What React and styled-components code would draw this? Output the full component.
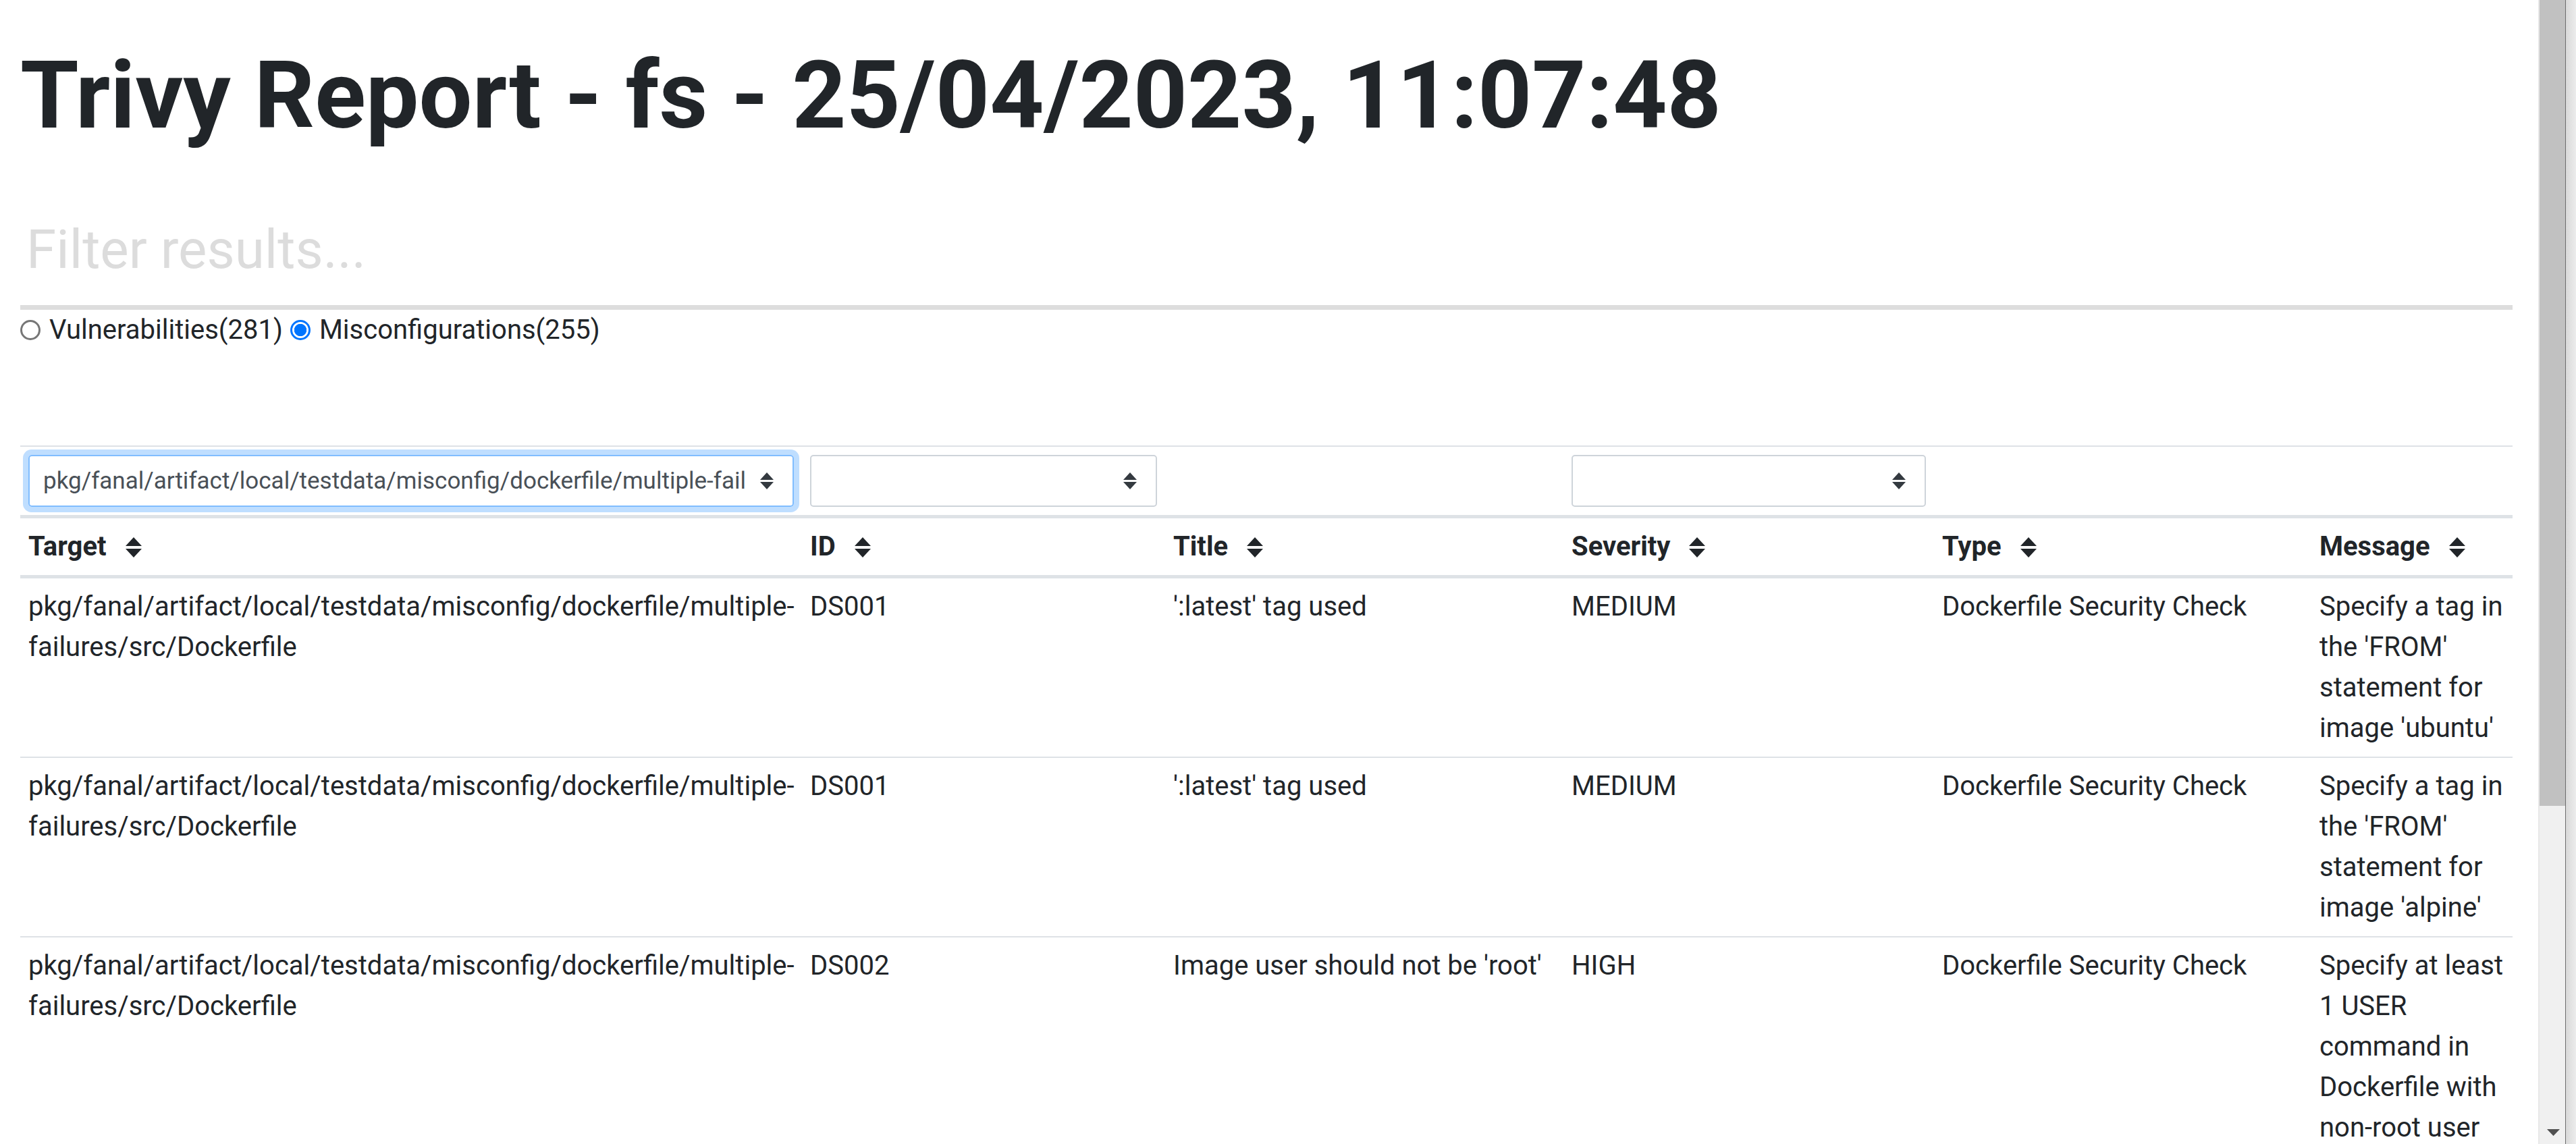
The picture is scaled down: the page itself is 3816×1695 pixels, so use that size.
import React, { useState } from 'react';
import styled, { createGlobalStyle } from 'styled-components';

const GlobalStyle = createGlobalStyle`
  html, body {
    margin: 0;
    padding: 0;
    background: #fff;
    overflow: hidden;
  }
  body {
    font-family: Roboto, "Liberation Sans", sans-serif;
    color: #212529;
  }
`;

const Window = styled.div`
  display: flex;
  height: 100vh;
  overflow: hidden;
`;

const Page = styled.div`
  flex: 1;
  min-width: 0;
  padding: 57px 38px 0 30px;
  font-size: 40px;
  line-height: 60px;
`;

const Title = styled.h1`
  margin: 0 0 63px;
  font-size: 140px;
  line-height: 168px;
  font-weight: 700;
  color: #212529;
`;

const FilterInput = styled.input`
  display: block;
  width: 100%;
  height: 171px;
  box-sizing: border-box;
  margin: 0;
  padding: 0 0 0 9px;
  border: none;
  border-bottom: 7px solid #dddddd;
  font-family: Roboto, sans-serif;
  font-size: 80px;
  color: #212529;
  outline: none;
  background: transparent;

  &::placeholder {
    color: #dcdcdc;
  }
`;

const RadioRow = styled.div`
  display: flex;
  align-items: center;
  height: 60px;
`;

const RadioLabel = styled.label`
  display: flex;
  align-items: center;
  gap: 13px;
  margin-right: 11px;
  cursor: pointer;
`;

const Radio = styled.input`
  appearance: none;
  width: 30px;
  height: 30px;
  margin: 0;
  border-radius: 50%;
  box-sizing: border-box;
  border: 3px solid #767676;
  background: #fff;

  &:checked {
    border-color: #0075ff;
    background: radial-gradient(circle, #0075ff 0 52%, #fff 56%);
  }
`;

const Table = styled.table`
  margin-top: 141px;
  width: 100%;
  border-collapse: collapse;
  table-layout: fixed;
`;

const FilterCell = styled.td`
  padding: 12px;
  border-top: 2px solid #dee2e6;
  border-bottom: 5px solid #dee2e6;
  vertical-align: top;
`;

const HeadCell = styled.th`
  padding: 12px;
  text-align: left;
  font-weight: 700;
  border-bottom: 5px solid #dee2e6;
  white-space: nowrap;
`;

const Cell = styled.td`
  padding: 12px;
  vertical-align: top;
  border-top: 2px solid #dee2e6;
`;

const SelectWrap = styled.div`
  position: relative;
  width: 100%;
  border-radius: 5px;
  box-shadow: ${p => (p.$focused ? '0 0 0 8px rgba(0, 123, 255, 0.25)' : 'none')};
`;

const Select = styled.select`
  display: block;
  width: 100%;
  height: 77px;
  box-sizing: border-box;
  appearance: none;
  margin: 0;
  padding: 0 70px 0 20px;
  border: 2.5px solid ${p => (p.$focused ? '#80bdff' : '#ced4da')};
  border-radius: 5px;
  background: #fff;
  font-family: Roboto, sans-serif;
  font-size: 35px;
  color: #495057;
  outline: none;
`;

const SelectArrow = styled.svg`
  position: absolute;
  right: 30px;
  top: 26px;
  pointer-events: none;
`;

const SortSvg = styled.svg`
  margin-left: 28px;
  vertical-align: -3px;
`;

const Scrollbar = styled.div`
  flex: none;
  width: 56px;
  display: flex;
  height: 100vh;
`;

const Track = styled.div`
  width: 40px;
  box-sizing: border-box;
  border-left: 2px solid #e8e8e8;
  background: #f0f0f0;
  display: flex;
  flex-direction: column;
`;

const Thumb = styled.div`
  height: 1194px;
  background: #c1c1c1;
`;

const TrackRest = styled.div`
  flex: 1;
`;

const ArrowButton = styled.div`
  height: 34px;
  display: flex;
  align-items: center;
  justify-content: center;
  padding-left: 2px;
`;

const WindowEdge = styled.div`
  flex: 1;
  border-left: 1px solid #6d6d6d;
  background: linear-gradient(to right, #d9d9d9, #ececec);
`;

const SortIcon = () => (
  <SortSvg width="24" height="30" viewBox="0 0 24 30">
    <path d="M12 0 L24 13 H0 Z M0 17 H24 L12 30 Z" fill="#212529" />
  </SortSvg>
);

const FilterSelect = ({ value, focused }) => (
  <SelectWrap $focused={focused}>
    <Select $focused={focused} defaultValue={value}>
      <option value={value}>{value}</option>
    </Select>
    <SelectArrow width="20" height="25" viewBox="0 0 20 25">
      <path d="M10 0 L20 11 H0 Z M0 14 H20 L10 25 Z" fill="#343a40" />
    </SelectArrow>
  </SelectWrap>
);

const target = 'pkg/fanal/artifact/local/testdata/misconfig/dockerfile/multiple-failures/src/Dockerfile';

const rows = [
  { id: 'DS001', title: "':latest' tag used", severity: 'MEDIUM', message: "Specify a tag in the 'FROM' statement for image 'ubuntu'" },
  { id: 'DS001', title: "':latest' tag used", severity: 'MEDIUM', message: "Specify a tag in the 'FROM' statement for image 'alpine'" },
  { id: 'DS002', title: "Image user should not be 'root'", severity: 'HIGH', message: 'Specify at least 1 USER command in Dockerfile with non-root user as the last USER command' },
  { id: 'DS026', title: 'No HEALTHCHECK defined', severity: 'LOW', message: 'Add HEALTHCHECK instruction in your Dockerfile' },
];

const columns = [
  { name: 'Target', width: 1158 },
  { name: 'ID', width: 538 },
  { name: 'Title', width: 590 },
  { name: 'Severity', width: 549 },
  { name: 'Type', width: 559 },
  { name: 'Message', width: 298 },
];

export default function App() {
  const [kind, setKind] = useState('misconf');

  return (
    <Window>
      <GlobalStyle />
      <Page>
        <Title>Trivy Report - fs - 25/04/2023, 11:07:48</Title>
        <FilterInput placeholder="Filter results..." />
        <RadioRow>
          <RadioLabel>
            <Radio type="radio" name="kind" checked={kind === 'vuln'} onChange={() => setKind('vuln')} />
            Vulnerabilities(281)
          </RadioLabel>
          <RadioLabel>
            <Radio type="radio" name="kind" checked={kind === 'misconf'} onChange={() => setKind('misconf')} />
            Misconfigurations(255)
          </RadioLabel>
        </RadioRow>
        <Table>
          <colgroup>
            {columns.map(c => <col key={c.name} style={{ width: c.width }} />)}
          </colgroup>
          <thead>
            <tr>
              <FilterCell><FilterSelect value={target} focused /></FilterCell>
              <FilterCell><FilterSelect value="" /></FilterCell>
              <FilterCell />
              <FilterCell><FilterSelect value="" /></FilterCell>
              <FilterCell />
              <FilterCell />
            </tr>
            <tr>
              {columns.map(c => (
                <HeadCell key={c.name}>{c.name}<SortIcon /></HeadCell>
              ))}
            </tr>
          </thead>
          <tbody>
            {rows.map((r, i) => (
              <tr key={i}>
                <Cell>{target}</Cell>
                <Cell>{r.id}</Cell>
                <Cell>{r.title}</Cell>
                <Cell>{r.severity}</Cell>
                <Cell>Dockerfile Security Check</Cell>
                <Cell>{r.message}</Cell>
              </tr>
            ))}
          </tbody>
        </Table>
      </Page>
      <Scrollbar>
        <Track>
          <Thumb />
          <TrackRest />
          <ArrowButton>
            <svg width="19" height="10" viewBox="0 0 19 10">
              <path d="M0 0 H19 L9.5 10 Z" fill="#505050" />
            </svg>
          </ArrowButton>
        </Track>
        <WindowEdge />
      </Scrollbar>
    </Window>
  );
}
